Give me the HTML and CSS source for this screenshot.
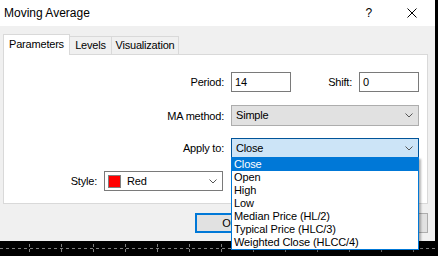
FILE: index.html
```html
<!DOCTYPE html>
<html>
<head>
<title>Moving Average</title>
<meta http-equiv="Content-Type" content="text/html; charset=utf-8" />
<link rel="stylesheet" href="styles.css">
</head>
<body>
<div class="dialog">
	<div class="titlebar">
		<span class="title">Moving Average</span>
		<span class="help">?</span>
		<svg class="closebtn" width="10" height="10" viewBox="0 0 10 10"><path d="M0.5 0.5L9.5 9.5M9.5 0.5L0.5 9.5" stroke="#000" stroke-width="1" fill="none"/></svg>
	</div>
	<div class="tabs">
		<div class="tab sel">Parameters</div>
		<div class="tab tab-levels">Levels</div>
		<div class="tab tab-vis">Visualization</div>
	</div>
	<div class="panel">
		<div class="row row1">
			<div class="lbl lbl-main">Period:</div>
			<div class="edit">14</div>
			<div class="lbl lbl-shift">Shift:</div>
			<div class="edit">0</div>
		</div>
		<div class="row row2">
			<div class="lbl lbl-main">MA method:</div>
			<div class="combo combo-gray">Simple<svg class="chev" width="8" height="5" viewBox="0 0 8 5"><path d="M0.5 0.5L4 4L7.5 0.5" stroke="#555" fill="none"/></svg></div>
		</div>
		<div class="row row3">
			<div class="lbl lbl-main">Apply to:</div>
			<div class="combo combo-focus">Close<svg class="chev" width="8" height="5" viewBox="0 0 8 5"><path d="M0.5 0.5L4 4L7.5 0.5" stroke="#555" fill="none"/></svg></div>
		</div>
		<div class="row row4">
			<div class="lbl lbl-style">Style:</div>
			<div class="combo combo-style"><span class="swatch"></span>Red<svg class="chev" width="8" height="5" viewBox="0 0 8 5"><path d="M0.5 0.5L4 4L7.5 0.5" stroke="#555" fill="none"/></svg></div>
		</div>
	</div>
	<div class="buttons">
		<div class="btn default">OK</div>
		<div class="btn">Cancel</div>
		<div class="btn">Reset</div>
	</div>
	<!-- open list of the "Apply to" combo -->
	<div class="droplist">
		<div class="item hi">Close</div>
		<div class="item">Open</div>
		<div class="item">High</div>
		<div class="item">Low</div>
		<div class="item">Median Price (HL/2)</div>
		<div class="item">Typical Price (HLC/3)</div>
		<div class="item">Weighted Close (HLCC/4)</div>
	</div>
</div>
<svg class="chart" width="438" height="15" viewBox="0 0 438 15">
	<line x1="0" y1="7.5" x2="438" y2="7.5" stroke="#7f7f7f" stroke-dasharray="3 3"/>
	<g stroke="#7f7f7f" stroke-dasharray="3 2">
		<line x1="29.5" y1="3" x2="29.5" y2="12"/>
		<line x1="61.5" y1="3" x2="61.5" y2="12"/>
		<line x1="93.5" y1="3" x2="93.5" y2="12"/>
		<line x1="125.5" y1="3" x2="125.5" y2="12"/>
		<line x1="157.5" y1="3" x2="157.5" y2="12"/>
		<line x1="189.5" y1="3" x2="189.5" y2="12"/>
		<line x1="221.5" y1="3" x2="221.5" y2="12"/>
		<line x1="253.5" y1="3" x2="253.5" y2="12"/>
		<line x1="285.5" y1="3" x2="285.5" y2="12"/>
		<line x1="317.5" y1="3" x2="317.5" y2="12"/>
		<line x1="349.5" y1="3" x2="349.5" y2="12"/>
		<line x1="381.5" y1="3" x2="381.5" y2="12"/>
		<line x1="413.5" y1="3" x2="413.5" y2="12"/>
	</g>
</svg>
</body>
</html>
```

FILE: styles.css
```css
html, body {
	margin: 0;
	padding: 0;
}
body {
	background-color: #000;
	width: 438px;
	height: 256px;
	overflow: hidden;
	font-family: "Liberation Sans", Arial, sans-serif;
	font-size: 11px;
	letter-spacing: -0.2px;
	color: #000;
}
.dialog {
	position: relative;
	width: 435px;
	height: 241px;
	background-color: #f0f0f0;
}
.titlebar {
	display: flex;
	align-items: center;
	height: 26px;
	background-color: #fff;
	padding: 0 18px 0 4px;
}
.title {
	font-size: 12px;
	letter-spacing: 0;
	flex: 1;
}
.help {
	font-size: 12px;
	margin-right: 35px;
}
.closebtn {
	display: block;
}
.tabs {
	display: flex;
	align-items: flex-end;
	height: 28px;
	padding-left: 3px;
	position: relative;
	z-index: 1;
}
.tab {
	box-sizing: border-box;
	height: 18px;
	line-height: 17px;
	border: solid #d9d9d9 1px;
	border-bottom: none;
	background-color: #f0f0f0;
	text-align: center;
}
.tab.sel {
	width: 67px;
	height: 21px;
	line-height: 18px;
	background-color: #fff;
	margin-bottom: -1px;
}
.tab-levels {
	width: 42px;
	border-left: none;
}
.tab-vis {
	width: 67px;
	border-left: none;
}
.panel {
	box-sizing: border-box;
	margin-left: 3px;
	width: 425px;
	height: 150px;
	border: solid #d9d9d9 1px;
	background-color: #fff;
}
.row {
	display: flex;
	align-items: center;
}
.row1 {
	margin-top: 17px;
}
.row2 {
	margin-top: 13px;
}
.row3 {
	margin-top: 12px;
}
.row4 {
	margin-top: 13px;
}
.lbl {
	text-align: right;
	margin-right: 7px;
}
.lbl-main {
	width: 220px;
}
.lbl-shift {
	width: 61px;
}
.lbl-style {
	width: 93px;
}
.edit {
	box-sizing: border-box;
	width: 60px;
	height: 20px;
	line-height: 18px;
	border: solid #7a7a7a 1px;
	padding-left: 3px;
	background-color: #fff;
}
.combo {
	box-sizing: border-box;
	position: relative;
	width: 188px;
	height: 20px;
	line-height: 18px;
	padding-left: 4px;
	border: solid #adadad 1px;
}
.combo-gray {
	height: 21px;
	line-height: 19px;
	background-color: #e1e1e1;
}
.combo-focus {
	background-color: #cce4f7;
	border-color: #005499;
}
.combo-style {
	width: 119px;
	background-color: #fff;
	border-color: #7a7a7a;
	display: flex;
	align-items: center;
	padding-left: 3px;
}
.chev {
	position: absolute;
	right: 5px;
	top: 7px;
}
.swatch {
	box-sizing: border-box;
	width: 13px;
	height: 13px;
	border: solid #808080 1px;
	background-color: #f00;
	margin-right: 6px;
}
.buttons {
	display: flex;
	justify-content: flex-end;
	gap: 4px;
	margin-top: 9px;
	padding-right: 7px;
}
.btn {
	box-sizing: border-box;
	width: 75px;
	height: 20px;
	line-height: 18px;
	text-align: center;
	background-color: #e1e1e1;
	border: solid #adadad 1px;
}
.btn.default {
	border: solid #0078d7 2px;
	line-height: 16px;
	padding-right: 5px;
}
.droplist {
	position: absolute;
	left: 231px;
	top: 157px;
	width: 188px;
	box-sizing: border-box;
	border: solid #0078d7 1px;
	background-color: #fff;
	box-shadow: 2px 2px 2px rgba(0, 0, 0, 0.3);
	z-index: 10;
}
.item {
	height: 13px;
	line-height: 13px;
	padding-left: 2px;
	white-space: nowrap;
	letter-spacing: -0.1px;
}
.item.hi {
	background-color: #0078d7;
	color: #fff;
}
.chart {
	display: block;
}
```
